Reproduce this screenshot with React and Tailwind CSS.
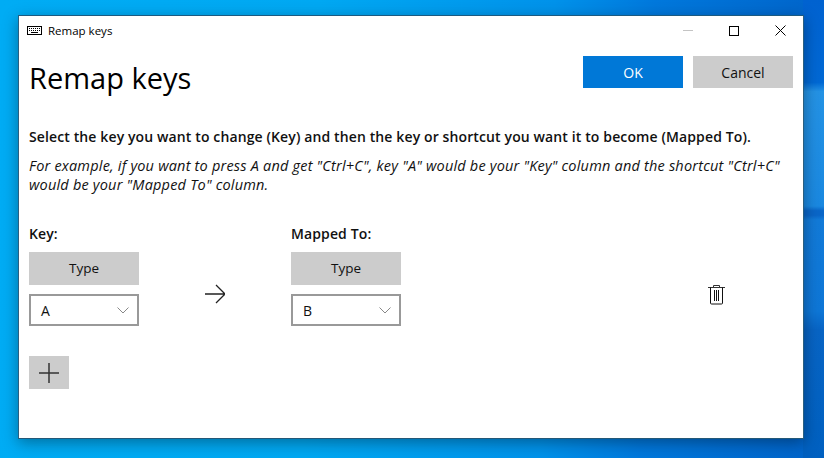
const font = { fontFamily: '"Open Sans", "Noto Sans", sans-serif' };

function KeyboardIcon() {
  return (
    <svg width="15" height="9" viewBox="0 0 15 9" fill="none" className="shrink-0">
      <rect x="0.5" y="0.5" width="14" height="8" stroke="#000" />
      <path d="M2 2.5h11M2 4.5h11" stroke="#000" strokeDasharray="1 1" />
      <path d="M4 6.5h7" stroke="#000" />
    </svg>
  );
}

function TrashIcon() {
  return (
    <svg width="17" height="21" viewBox="0 0 17 21" fill="none">
      <path d="M0 3.5h17M5.5 3V1.5h6V3" stroke="#333" />
      <path d="M2.5 3.5V19a1 1 0 0 0 1 1h10a1 1 0 0 0 1-1V3.5" stroke="#111" />
      <path d="M6.5 6v11M8.5 6v11M10.5 6v11" stroke="#111" />
    </svg>
  );
}

function KeyColumn({ label, value }) {
  return (
    <div className="flex flex-col w-[110px] shrink-0">
      <p className="text-[14px] leading-[18px] tracking-[0.12px] font-semibold text-[#111] mb-[9px] whitespace-nowrap">{label}</p>
      <button className="h-[33px] w-[110px] bg-[#cccccc] text-[13.5px] text-[#111]">Type</button>
      <div className="mt-[9px] h-[32px] w-[110px] border-2 border-[#999999] flex items-center justify-between pl-[10px] pr-[8px]">
        <span className="text-[14px] text-[#111]">{value}</span>
        <svg width="12" height="7" viewBox="0 0 12 7" fill="none" stroke="#888" strokeWidth="1"><path d="M0.5 0.5L6 6l5.5-5.5" /></svg>
      </div>
    </div>
  );
}

export default function App() {
  return (
    <div
      style={font}
      className="w-[824px] h-[458px] overflow-hidden pt-[15px] pl-[18px] bg-no-repeat [background-size:21px_100%,100%_100%] [background-position:right_top,left_top] bg-[linear-gradient(180deg,#0062d0_0%,#0068d4_18%,#2492e4_20%,#1a88e0_45%,#0a66c8_46%,#0a66c8_47%,#127ad8_48%,#0e76d6_68%,#0864c4_72%,#0060c0_100%),linear-gradient(92deg,#00acf4_0%,#00a8f2_38%,#0092ea_66%,#0078dc_78%,#0062c8_100%)]"
    >
      <div className="w-[786px] h-[424px] bg-white border border-t-[#1c5a80] border-x-[#2a5f80] border-b-[#245878] shadow-[0_4px_14px_rgba(0,0,0,0.35)] flex flex-col">
        {/* title bar */}
        <div className="flex items-center h-[29px] pl-[8px]">
          <KeyboardIcon />
          <span className="ml-[6px] text-[11.5px] text-black">Remap keys</span>
          <div className="ml-auto flex items-center">
            <div className="w-[46px] flex justify-center"><div className="w-[10px] h-px bg-[#c4c4c4]" /></div>
            <div className="w-[46px] flex justify-center"><div className="w-[10px] h-[10px] border border-black" /></div>
            <div className="w-[46px] flex justify-center">
              <svg width="11" height="11" viewBox="0 0 11 11" stroke="#000" strokeWidth="1"><path d="M0.5 0.5l10 10M10.5 0.5l-10 10" /></svg>
            </div>
          </div>
        </div>

        <div className="flex-1 px-[10px]">
          <div className="flex items-start justify-between">
            <h1 className="text-[29px] leading-[40px] text-black mt-[13px]">Remap keys</h1>
            <div className="flex gap-[10px] mt-[11px]">
              <button className="w-[100px] h-[32px] bg-[#0078d7] text-white text-[14px]">OK</button>
              <button className="w-[100px] h-[32px] bg-[#cccccc] text-[#111] text-[14px]">Cancel</button>
            </div>
          </div>

          <p className="mt-[30px] text-[14px] leading-[18px] tracking-[0.12px] font-semibold text-[#111] whitespace-nowrap">
            Select the key you want to change (Key) and then the key or shortcut you want it to become (Mapped To).
          </p>
          <p className="mt-[10px] text-[14.5px] leading-[19px] tracking-[0.2px] italic text-[#111]">
            For example, if you want to press A and get "Ctrl+C", key "A" would be your "Key" column and the shortcut "Ctrl+C" would be your "Mapped To" column.
          </p>

          <div className="flex mt-[31px]">
            <KeyColumn label="Key:" value="A" />
            <div className="w-[152px] shrink-0 flex justify-center pt-[59px]">
              <svg width="20" height="20" viewBox="0 0 20 20" fill="none" stroke="#222" strokeWidth="1.3" className="self-start">
                <path d="M0 10h19.5M11 1l9 9-9 9" />
              </svg>
            </div>
            <KeyColumn label="Mapped To:" value="B" />
            <div className="ml-[307px] pt-[59px]">
              <TrashIcon />
            </div>
          </div>

          <button className="mt-[30px] w-[40px] h-[33px] bg-[#cccccc] flex items-center justify-center">
            <svg width="20" height="20" viewBox="0 0 20 20" stroke="#333" strokeWidth="1.5"><path d="M0 10h20M10 0v20" /></svg>
          </button>
        </div>
      </div>
    </div>
  );
}
